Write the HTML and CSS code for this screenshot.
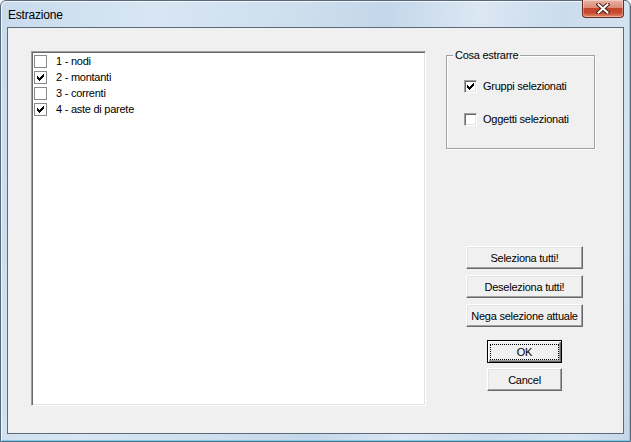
FILE: index.html
```html
<!DOCTYPE html>
<html>
<head>
<meta charset="utf-8">
<link rel="stylesheet" href="styles.css">
</head>
<body>
<div class="window">
  <div class="titlebar">
    <span class="title">Estrazione</span>
    <div class="close">
      <svg width="14" height="11" viewBox="0 0 14 11">
        <path d="M2.5 1.5 L11.5 9.5 M11.5 1.5 L2.5 9.5" stroke="#4a2118" stroke-width="4" stroke-linecap="square" fill="none"/>
        <path d="M2.5 1.5 L11.5 9.5 M11.5 1.5 L2.5 9.5" stroke="#ffffff" stroke-width="2" stroke-linecap="square" fill="none"/>
      </svg>
    </div>
  </div>
  <div class="client">
    <div class="listbox">
      <div class="item"><span class="lbchk"></span><span class="lbl">1 - nodi</span></div>
      <div class="item"><span class="lbchk"><svg class="tick" width="11" height="11" viewBox="0 0 11 11"><path d="M8 2h1v1h-1z M7 3h2v1h-2z M2 4h1v1h-1z M6 4h3v1h-3z M2 5h2v1h-2z M5 5h3v1h-3z M2 6h5v1h-5z M3 7h3v1h-3z M4 8h1v1h-1z" fill="#000"/></svg></span><span class="lbl">2 - montanti</span></div>
      <div class="item"><span class="lbchk"></span><span class="lbl">3 - correnti</span></div>
      <div class="item"><span class="lbchk"><svg class="tick" width="11" height="11" viewBox="0 0 11 11"><path d="M8 2h1v1h-1z M7 3h2v1h-2z M2 4h1v1h-1z M6 4h3v1h-3z M2 5h2v1h-2z M5 5h3v1h-3z M2 6h5v1h-5z M3 7h3v1h-3z M4 8h1v1h-1z" fill="#000"/></svg></span><span class="lbl">4 - aste di parete</span></div>
    </div>
    <div class="side">
      <fieldset class="group">
        <legend class="legend">Cosa estrarre</legend>
        <div class="opt"><span class="chk"><svg class="tick" width="11" height="11" viewBox="0 0 11 11"><path d="M8 2h1v1h-1z M7 3h2v1h-2z M2 4h1v1h-1z M6 4h3v1h-3z M2 5h2v1h-2z M5 5h3v1h-3z M2 6h5v1h-5z M3 7h3v1h-3z M4 8h1v1h-1z" fill="#000"/></svg></span><span class="lbl">Gruppi selezionati</span></div>
        <div class="opt opt2"><span class="chk"></span><span class="lbl">Oggetti selezionati</span></div>
      </fieldset>
      <div class="buttons">
        <div class="btn wide">Seleziona tutti!</div>
        <div class="btn wide b2">Deseleziona tutti!</div>
        <div class="btn wide b3">Nega selezione attuale</div>
        <div class="btn small default"><span class="focus">OK</span></div>
        <div class="btn small cancel">Cancel</div>
      </div>
    </div>
  </div>
</div>
</body>
</html>
```
FILE: styles.css
```css
html, body {
  margin: 0;
  padding: 0;
}
body {
  width: 631px;
  height: 442px;
  overflow: hidden;
  background: #ffffff;
  font-family: "Liberation Sans", Arial, sans-serif;
}
.window {
  box-sizing: border-box;
  width: 631px;
  height: 442px;
  border: 1px solid #566879;
  border-radius: 6px 6px 0 0;
  padding: 0 6px 7px 6px;
  display: flex;
  flex-direction: column;
  background: linear-gradient(100deg, #c8dbed 0%, #d8e6f3 22%, #cfdfee 40%, #c4d7ea 55%, #dbe7f3 68%, #cbdced 80%, #d6e4f1 92%, #c3d6e9 100%);
  box-shadow: inset 1px 1px 0 rgba(255,255,255,0.75), inset -1px -1px 0 #78cdf0;
}
.titlebar {
  height: 26px;
  flex: none;
  display: flex;
  align-items: center;
}
.title {
  font-size: 12px;
  letter-spacing: -0.2px;
  color: #000;
  margin-left: 1px;
  padding-top: 1px;
}
.close {
  margin-left: auto;
  align-self: flex-start;
  margin-top: -1px;
  width: 42px;
  height: 18px;
  box-sizing: border-box;
  border: 1px solid #6b2d22;
  border-top: none;
  border-radius: 0 0 4px 4px;
  background: linear-gradient(180deg, #eab2a4 0%, #dc8b77 45%, #c2442b 50%, #c94a30 75%, #e38a6c 100%);
  box-shadow: inset 0 0 0 1px rgba(255,255,255,0.35);
  display: flex;
  align-items: center;
  justify-content: center;
}
.close svg {
  display: block;
}
.client {
  flex: 1;
  box-sizing: border-box;
  border: 1px solid #5c6a79;
  background: #f0f0f0;
  padding: 23px 0 0 23px;
  display: flex;
  align-items: flex-start;
}
.listbox {
  box-sizing: border-box;
  width: 395px;
  height: 355px;
  flex: none;
  background: #ffffff;
  border: 1px solid;
  border-color: #a0a0a0 #ffffff #ffffff #a0a0a0;
  box-shadow: inset 1px 1px 0 #696969, inset -1px -1px 0 #e3e3e3;
  padding: 1px;
}
.item {
  height: 16px;
  display: flex;
  align-items: center;
  padding-left: 1px;
}
.lbl {
  font-size: 11px;
  letter-spacing: -0.25px;
  color: #000;
  line-height: 13px;
  white-space: nowrap;
}
.lbchk {
  box-sizing: border-box;
  width: 13px;
  height: 13px;
  flex: none;
  border: 1px solid #8a8a8a;
  background: #fff;
  margin-right: 9px;
}
.tick {
  display: block;
}
.side {
  width: 149px;
  flex: none;
  margin-left: 20px;
  margin-top: -2px;
  display: flex;
  flex-direction: column;
}
.group {
  margin: 0;
  padding: 18px 0 22px 17px;
  border: 1px solid #a0a0a0;
  box-shadow: inset 1px 1px 0 #ffffff, 1px 1px 0 #ffffff;
  min-width: 0;
}
.legend {
  font-size: 11px;
  letter-spacing: -0.25px;
  line-height: 13px;
  padding: 0 2px;
  margin-left: -11px;
  background: #f0f0f0;
  color: #000;
}
.opt {
  height: 13px;
  display: flex;
  align-items: center;
}
.opt2 {
  margin-top: 20px;
}
.chk {
  box-sizing: border-box;
  width: 13px;
  height: 13px;
  flex: none;
  border: 1px solid;
  border-color: #a0a0a0 #ffffff #ffffff #a0a0a0;
  box-shadow: inset 1px 1px 0 #696969, inset -1px -1px 0 #e3e3e3;
  background: #fff;
  margin-right: 6px;
}
.buttons {
  margin-top: 97px;
  margin-left: 20px;
  width: 117px;
  display: flex;
  flex-direction: column;
  align-items: center;
}
.btn {
  box-sizing: border-box;
  height: 23px;
  background: #f0f0f0;
  border: 1px solid;
  border-color: #ffffff #696969 #696969 #ffffff;
  box-shadow: inset -1px -1px 0 #a0a0a0, inset 1px 1px 0 #e3e3e3;
  font-size: 11px;
  letter-spacing: -0.25px;
  color: #000;
  display: flex;
  align-items: center;
  justify-content: center;
  white-space: nowrap;
}
.wide {
  width: 117px;
}
.b2, .b3 {
  margin-top: 6px;
}
.small {
  width: 75px;
}
.default {
  margin-top: 13px;
  border: 1px solid #000;
  box-shadow: inset 1px 1px 0 #ffffff, inset -1px -1px 0 #696969, inset -2px -2px 0 #a0a0a0;
  align-items: stretch;
}
.focus {
  flex: 1;
  margin: 3px 2px 2px 2px;
  border: 1px dotted #000;
  display: flex;
  align-items: center;
  justify-content: center;
}
.cancel {
  margin-top: 5px;
}
```
